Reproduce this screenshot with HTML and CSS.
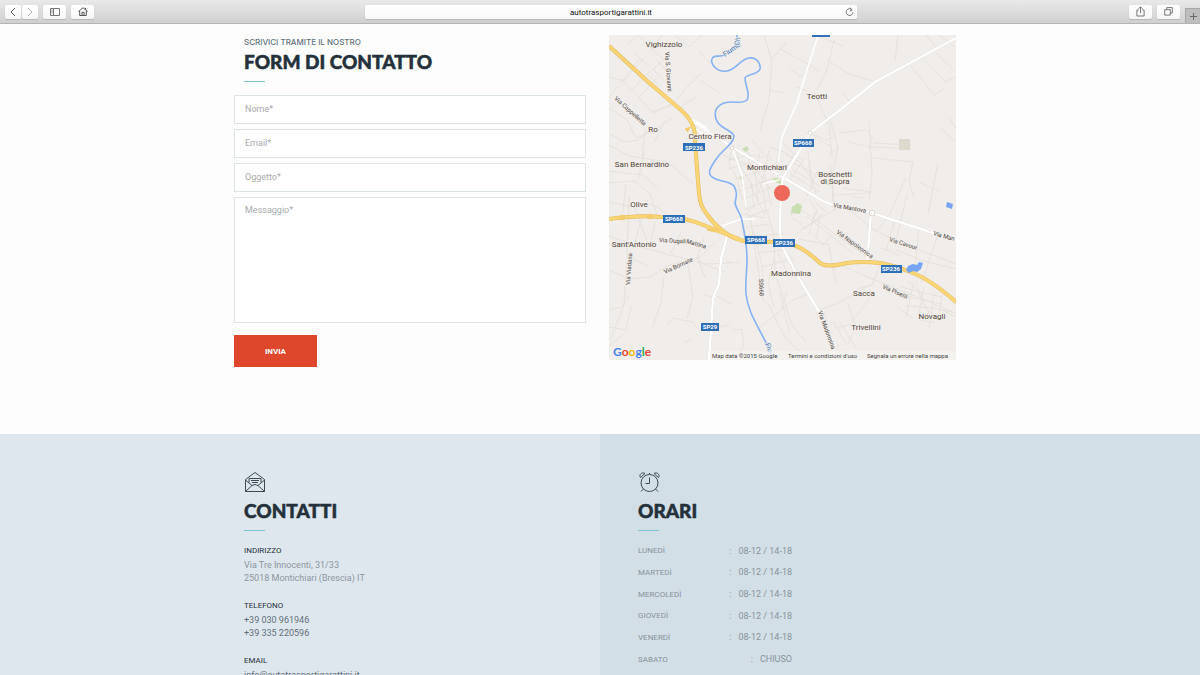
FILE: index.html
```html
<!DOCTYPE html>
<html lang="it">
<head>
<meta charset="utf-8">
<meta name="viewport" content="width=device-width, initial-scale=1">
<title>autotrasportigarattini.it</title>
<link rel="stylesheet" href="styles.css">
</head>
<body>
<header class="toolbar">
  <div class="tools">
    <div class="pair">
      <button class="tool" aria-label="Indietro"><svg width="8" height="10" viewBox="0 0 8 10"><path d="M6 1 2 5l4 4" stroke="#555"/></svg></button>
      <button class="tool" aria-label="Avanti"><svg width="8" height="10" viewBox="0 0 8 10"><path d="m2 1 4 4-4 4" stroke="#b5b5b5"/></svg></button>
    </div>
    <button class="tool wide" aria-label="Barra laterale"><svg width="10" height="8" viewBox="0 0 10 8"><path d="M.5.5h9v7h-9zM3.500.5v7M1.500 2h1M1.500 3.500h1M1.500 5h1" stroke="#777"/></svg></button>
    <button class="tool wide" aria-label="Pagina iniziale"><svg width="10" height="9" viewBox="0 0 10 9"><path d="M.5 4.500 5 .7l4.500 3.800M1.700 4v4.500h6.600V4M7.500 2.500V.8M4 8.300v-3h2v3" stroke="#555"/></svg></button>
  </div>
  <div class="address">
    <input class="url" type="text" aria-label="Indirizzo" value="autotrasportigarattini.it">
    <button class="reload" aria-label="Ricarica"><svg width="9" height="10" viewBox="0 0 9 10"><path d="M7.200 2.900A3.400 3.400 0 1 0 8 5.300M4.700.6l2.500 2.300-2.600 1.200" stroke="#777"/></svg></button>
  </div>
  <div class="tools end">
    <button class="tool wide" aria-label="Condividi"><svg width="9" height="11" viewBox="0 0 9 11"><path d="M2.800 4H.9v6h7.200V4H6.200M4.500 7V1M2.500 2.800l2-2 2 2" stroke="#777"/></svg></button>
    <button class="tool wide" aria-label="Pannelli"><svg width="9" height="9" viewBox="0 0 9 9"><path d="M.7 2.700h5.600v5.400H.7zM2.700 2.700V.6h5.600V6h-2" stroke="#777"/></svg></button>
    <button class="newtab" aria-label="Nuovo pannello"><svg width="9" height="9" viewBox="0 0 9 9"><path d="M4.500 1v7M1 4.500h7" stroke="#666"/></svg></button>
  </div>
</header>

<main class="page">
  <section class="contact">
    <div class="formcol">
      <div class="heading">
        <p class="kicker">SCRIVICI TRAMITE IL NOSTRO</p>
        <h2 class="title">FORM DI CONTATTO</h2>
      </div>
      <form class="form">
        <input class="field" type="text" placeholder="Nome*" aria-label="Nome">
        <input class="field" type="email" placeholder="Email*" aria-label="Email">
        <input class="field" type="text" placeholder="Oggetto*" aria-label="Oggetto">
        <textarea class="field area" placeholder="Messaggio*" aria-label="Messaggio"></textarea>
        <button class="send" type="button">INVIA</button>
      </form>
    </div>
    <svg class="map" viewBox="609 35 347 325" role="img" aria-label="Mappa di Montichiari">
      <rect x="609" y="35" width="347" height="325" fill="#f0edea"/>
      <g class="greens">
        <path d="m792 207 6-4 4 3-2 8-9-1zM742 149l5-3 2 3-3 3zM739 177l3-1 2 3-2 2zM773 178l5 0 4 4-2 2-6-3z" fill="#c7deae"/>
        <path d="M826 180h6v5h-6z" fill="#d5dfc0"/>
        <path d="M899 139h11v11h-11z" fill="#dddacd"/>
      </g>
      <g class="lanes">
        <path d="M627 45l11-10 17 17 18 15M635 54l14 12M609 77l15 4 19-22M621 83l18-24M624 82l29 31 20-10M632 90l19-20M639 97l18-19M650 112l25-7M658 63l14 14M653 69l11 12M652 70l14-12M648 75l13 12M656 60l16 14"/>
        <path d="M609 98l9-12M609 108l18 12 9 18 15-6 22-14M609 134l16 8 13-2 13-12M609 145l20 11 38 6 26 22M609 171l34 4 15 13M609 183l26-2 15 13 9 26M638 178l7-27M645 128l-4 46M626 184l-4 34M665 120l-10 21M651 52l11-17M673 104l17-20 12-11M678 109l19-13"/>
        <path d="M676 36l14 11 12-12M701 81l19 12M698 50l12 13M764 35l8 26-3 39-9 31M770 61l16-18M769 90l16 3M789 68l12 9 9-10M780 49l30 16 10 7M796 87l11 4M818 36l25 10M834 40l-7 30-10 20M827 60l22 14 24 7M815 93l14 32 3 32M898 35l-3 26M926 35l9 11M935 52l20 19M923 58l23 24 10-5M911 66l23 29 11-7M939 35l16 12"/>
        <path d="M842 93l10 11M830 119l8 29-9 7M839 133l28-3 5 7-3 12M838 147l-6 30 1 31M849 142l20 5 29 1M869 121l3 54-3 25M873 143l38 2M873 158l40 4M871 193l-37 2M913 161l-4 21 5 15M938 163l-10 51M920 183l19 8M941 128l14 13M949 118l7 10M813 135l14 5 9-4M817 139l14 7M842 188l30 4M865 198l-12-1M831 166l4 45"/>
        <path d="M780 139l9 11 13 10M769 147l15 5 13 9M785 154l15 8 12 17M752 139l8 12 12 9M731 151l-2 13 8 14 5 22M736 149l4 16 12 20 2 24M747 146l4 22 12 21 3 25M760 153l-5 19 3 29M769 150l-3 17-7 25M719 152l10 6 10 4 16 3M728 160l24-5 13 3M727 169l33-8M735 179l38-12M739 191l34-13M742 200l30-13M744 210l25-10M743 219l26-10M755 168l18 25M764 174l8 32M750 184l15 32M757 202l-12 13M779 150l-7 31M794 153l-13 27M808 151l4 39M804 159l-14 21M794 163l24 13M792 169l28 17M790 174l30 18M809 166l7 28M817 172l-10 24"/>
        <path d="M741 214l24 4M746 227l24-3M744 236l41-2M750 216l13 84 6 5 8 17 8 15 7 8 9 7M754 232l8 34 2 22M757 253l27-3M762 267l25-7M767 210l7 26 1 34M778 253l11 23M777 279l15 46 14 17M774 259l-6 24 6 24M787 251l8 12M795 235l30-22M800 230l38-22M809 198l8 13-5 12M814 201l14 12M793 218l14 11M806 199l-8 8M815 211l-6 23M820 215l-3 22M814 235l9 10 8-8M799 208l80 58M806 216l48 38M799 239l31 6"/>
        <path d="M795 207l-4 10M843 204l28 24 23 12 62 24M878 230l12-17 16-35M907 195l-12 50M919 227l-4 44M938 234l-16 48M896 250l27 11 33 8M895 219l-9 32M882 248l18 8M829 246l7 37M836 263l34 15 45 18 40 17M880 265l-8 20-15 4M872 284l-36 20-16 6M848 304l8 22-8 18M840 322l16 26M809 293l-16 7-24 20-16 13"/>
        <path d="M609 236l26 9 35 10 31 8 24 9M609 270l20 9 21-2 19-12 30-7 17-17M629 197l-2 59-3 48-13 35M635 208l13 36M609 310l13-3 7-12M609 327l17 3 5-24M629 257l19 9M664 276l-3 27-9 26M688 265l5 32-6 21M698 258l7 20M667 325l6-7 19 4 7 8 31-5M733 330l9-1 2 17-7 9M692 338l-8 5M717 296l14 8M703 294l9 3M681 232l-10 21M704 238l-7 20 7 6 28-1M726 262l12 1M641 220l-6 22M655 222l-5 25M609 202l24 5 19-3 18 12"/>
        <path d="M908 281l12 11 10 24M916 280l7 26 15 13M901 287l19 5 22 5M904 296l20 4 19 4M906 306l26 2 20 4M914 281l-8 36M924 287l-5 28M934 293l-5 35M942 295l-4 27M897 306l16 13M920 320l15 3M942 310l14 7M869 299l-19 25-12 4M824 312l9 36M833 321l14 24M609 346l15-12M780 293l9 38M787 291l-6 19"/>
      </g>
      <g class="roads">
        <path d="M818 36l-11 34-10 33-15 34-4 25"/>
        <path class="major" d="M687 118 732 147 784 178 823 201Q835 207 872 213L933 233 956 240"/>
        <path class="major" d="M956 38 875 82 850 102 810 133 800 150 783 177 781 193 780 222Q780 245 784 250L797 275 818 310 827 330 835 358"/>
        <path class="major" d="m727 236-6 23-2 25-6 14-4 62"/>
        <path class="major" d="m871 213-4 51"/>
        <path d="m732 147 10 28 4 31M722 226l19-7h14M779 180l-17 4"/>
      </g>
      <path d="M687 118q18 6 21 14t-18-6" fill="none" stroke="#fff" stroke-width="2"/>
      <path class="river" d="M737 35v8q-4 8-11 11c-6 5-12-1-14 5-2 4 4 12 11 12 11 2 17-12 26-13 8-1 12 6 11 11-2 6-14 5-15 9 0 7 6 17 2 22-6 5-13 0-23 3-8 3-10 9-8 16 3 10 15 10 18 17 0 8-12 14-17 22-5 7-10 14-6 18 5 6 18 4 23 10 4 7 2 11 1 17 1 6 6 11 7 18 3 14 5 26 5 38 0 13-2 24-1 35 2 17 10 29 16 41 5 9 8 15 10 24"/>
      <g class="highway">
        <path class="edge" d="m609 46 37 34 28 24q15 12 18 20 4 8 3 19l4 50q1 13 7 20 14 20 31 26 10 4 26 3 17-1 30 3 11 3 27 18 7 5 27 0 15-2 33 0 13 2 33 10 18 7 43 29M609 219q30-4 52-2 25 0 45 9 17 7 33 13"/>
        <path class="fill" d="m609 46 37 34 28 24q15 12 18 20 4 8 3 19l4 50q1 13 7 20 14 20 31 26 10 4 26 3 17-1 30 3 11 3 27 18 7 5 27 0 15-2 33 0 13 2 33 10 18 7 43 29M609 219q30-4 52-2 25 0 45 9 17 7 33 13"/>
        <path d="m691 127-6 2 3 3M707 230l7-3 7 3-6 2zM618 218l4-3 4 3-4 2zM646 217l4-3 4 3-4 2z" fill="#f3cc6b" stroke="#f3cc6b"/>
      </g>
      <g fill="#fff" stroke="#ddd6cc"><circle cx="810" cy="133" r="2"/><circle cx="872" cy="213" r="3"/><circle cx="732" cy="148" r="2"/></g>
      <path d="M906 270l2-4 5-2 4 1 2-3 4 1-2 6-4 3-4-1-4 2zM947 202l6 2-1 5-6-2z" fill="#78a5f3"/>
      <g class="shields">
        <rect x="812" y="35" width="18" height="2"/>
        <rect x="683" y="143" width="22" height="8"/><text x="694" y="150">SP236</text>
        <rect x="793" y="139" width="21" height="8"/><text x="803" y="145">SP668</text>
        <rect x="663" y="215" width="22" height="8"/><text x="674" y="221">SP668</text>
        <rect x="745" y="236" width="22" height="8"/><text x="756" y="242">SP668</text>
        <rect x="773" y="239" width="22" height="8"/><text x="784" y="245">SP236</text>
        <rect x="881" y="265" width="21" height="8"/><text x="891" y="271">SP236</text>
        <rect x="701" y="323" width="18" height="8"/><text x="710" y="329">SP29</text>
      </g>
      <g class="places">
        <text x="664" y="47">Vighizzolo</text>
        <text x="817" y="99">Teotti</text>
        <text x="653" y="132">Ro</text>
        <text x="710" y="139">Centro Fiera</text>
        <text x="642" y="167">San Bernardino</text>
        <text x="767" y="170">Montichiari</text>
        <text x="835" y="177">Boschetti</text>
        <text x="835" y="184">di Sopra</text>
        <text x="639" y="207">Olive</text>
        <text x="634" y="247">Sant'Antonio</text>
        <text x="791" y="276">Madonnina</text>
        <text x="864" y="296">Sacca</text>
        <text x="932" y="319">Novagli</text>
        <text x="866" y="330">Trivellini</text>
      </g>
      <g class="streets">
        <text transform="translate(665 52) rotate(86)">Via S. Giovanni</text>
        <text transform="translate(614 99) rotate(42)">Via Cappelletta</text>
        <text transform="translate(659 242) rotate(3)">Via Dugali</text>
        <text transform="translate(686 243) rotate(16)">Mattina</text>
        <text transform="translate(665 274) rotate(-25)">Via Bornate</text>
        <text transform="translate(630 285) rotate(-86)">Via Viadana</text>
        <text transform="translate(833 207) rotate(10)">Via Mantova</text>
        <text transform="translate(933 235) rotate(16)">Via Man</text>
        <text transform="translate(836 233) rotate(36)">Via Napoleonica</text>
        <text transform="translate(889 241) rotate(18)">Via Cavour</text>
        <text transform="translate(882 288) rotate(24)">Via Pisetti</text>
        <text transform="translate(818 312) rotate(70)">Via Madonnina</text>
        <text transform="translate(759 279) rotate(88)">SS668</text>
        <text class="water" transform="translate(725 57) rotate(-35)">Fiume</text>
        <text class="water" transform="translate(739 46) rotate(-80)">Ch</text>
        <text class="water" transform="translate(765 344) rotate(68)">Fiu</text>
      </g>
      <circle cx="782" cy="193" r="8" fill="#ec5547" fill-opacity=".88"/>
      <rect x="710" y="351" width="246" height="9" fill="#f5f3f1" fill-opacity=".7"/>
      <g class="legal">
        <text x="712" y="358">Map data ©2015 Google</text>
        <text x="788" y="358">Termini e condizioni d'uso</text>
        <text x="867" y="358">Segnala un errore nella mappa</text>
      </g>
      <text class="google" x="613" y="356"><tspan fill="#4285f4">G</tspan><tspan fill="#ea4335">o</tspan><tspan fill="#fbbc05">o</tspan><tspan fill="#4285f4">g</tspan><tspan fill="#34a853">l</tspan><tspan fill="#ea4335">e</tspan></text>
    </svg>
  </section>

  <section class="info">
    <div class="panel contacts">
      <div class="inner">
        <svg class="icon" viewBox="0 0 22 22"><path d="M1.500 8.500 11 1.500l9.500 7v12h-19zM1.500 9l6.500 5.500M20.500 9 14 14.500M1.500 20.500 8 14.500q3-2 6 0l6.500 6M5 11.500V7.500h12v4M7 9.500h8M8 11.500h6"/></svg>
        <h2 class="title">CONTATTI</h2>
        <dl class="details">
          <dt>INDIRIZZO</dt>
          <dd>Via Tre Innocenti, 31/33<br>25018 Montichiari (Brescia) IT</dd>
          <dt>TELEFONO</dt>
          <dd class="strong">+39 030 961946<br>+39 335 220596</dd>
          <dt>EMAIL</dt>
          <dd class="strong"><a href="mailto:info@autotrasportigarattini.it">info@autotrasportigarattini.it</a></dd>
        </dl>
      </div>
    </div>
    <div class="panel hours">
      <div class="inner">
        <svg class="icon" viewBox="0 0 22 22"><circle cx="11.500" cy="12" r="8.500"/><path d="M11.500 6.500v6h-4M5.500 18 3 20.500M17.500 18l2.500 2.500M2.500 6.500C.5 4 4 .5 7 2.500zM20.500 6.500C22.500 4 19 .5 16 2.500zM11.500 3.500V2"/></svg>
        <h2 class="title">ORARI</h2>
        <table class="times">
          <tr><th scope="row">LUNEDÌ</th><td><span class="colon">:</span>08-12 / 14-18</td></tr>
          <tr><th scope="row">MARTEDÌ</th><td><span class="colon">:</span>08-12 / 14-18</td></tr>
          <tr><th scope="row">MERCOLEDÌ</th><td><span class="colon">:</span>08-12 / 14-18</td></tr>
          <tr><th scope="row">GIOVEDÌ</th><td><span class="colon">:</span>08-12 / 14-18</td></tr>
          <tr><th scope="row">VENERDÌ</th><td><span class="colon">:</span>08-12 / 14-18</td></tr>
          <tr><th scope="row">SABATO</th><td><span class="colon">:</span>CHIUSO</td></tr>
        </table>
      </div>
    </div>
  </section>
</main>
</body>
</html>
```
FILE: styles.css
```css
* { box-sizing: border-box; }
body {
  margin: 0;
  height: 100vh;
  display: flex;
  flex-direction: column;
  overflow: hidden;
  background: #fdfdfd;
  color: #24313b;
  font-family: Roboto, "Liberation Sans", sans-serif;
  font-size: 9px;
}
h2, p, dl, dd { margin: 0; }
button, input, textarea { font: inherit; margin: 0; }

/* Browser bar */
.toolbar {
  flex: none;
  height: 24px;
  display: grid;
  grid-template-columns: 365fr 492px 343fr;
  align-items: center;
  background: linear-gradient(#e9e9e9, #d0d0d0);
  border-bottom: 1px solid #b4b4b4;
}
.toolbar svg, .icon { fill: none; stroke-width: 1; }
.tools { display: flex; gap: 5px; padding-left: 5px; align-items: center; height: 100%; }
.tools.end { justify-content: flex-end; padding-left: 0; }
.pair { display: flex; gap: 1px; }
.tool {
  width: 16px;
  height: 14px;
  padding: 0;
  display: grid;
  place-items: center;
  border: 0;
  border-radius: 2px;
  background: linear-gradient(#fff, #f6f6f6);
  box-shadow: 0 1px 1px #b5b5b5;
}
.wide { width: 23px; }
.newtab {
  width: 15px;
  height: 15px;
  padding: 0;
  align-self: flex-end;
  display: grid;
  place-items: center;
  border: 1px solid #a8a8a8;
  border-width: 1px 0 0 1px;
  background: #bdbdbd;
}
.address {
  display: grid;
  grid-template-columns: 16px 1fr 16px;
  height: 14px;
  border-radius: 2px;
  background: linear-gradient(#fff, #f8f8f8);
  box-shadow: 0 1px 1px #b5b5b5;
}
.url {
  grid-column: 2;
  min-width: 0;
  padding: 1px 0 0;
  border: 0;
  background: none;
  text-align: center;
  font-size: 8px;
  color: #111;
}
.reload { border: 0; padding: 0; background: none; display: grid; place-items: center; }

/* Form and map */
.page { flex: 1; min-height: 0; display: flex; flex-direction: column; overflow: hidden; }
.contact {
  flex: none;
  width: 100%;
  max-width: 732px;
  margin: 0 auto;
  padding: 11px 10px 67px 0;
  display: grid;
  grid-template-columns: 352px 1fr;
  column-gap: 23px;
  align-items: start;
}
.heading { padding: 1px 0 0 10px; }
.kicker { font-family: Inter, sans-serif; font-size: 8px; line-height: 12px; font-weight: 500; color: #5f717c; }
.title {
  font-family: Lato, sans-serif;
  font-weight: 900;
  font-size: 19px;
  line-height: 27px;
  color: #24313b;
  -webkit-text-stroke: .5px #24313b;
}
.title::after { content: ""; display: block; width: 21px; height: 1px; margin-top: 6px; background: #7fc4d2; }
.form { display: flex; flex-direction: column; gap: 5px; padding-top: 13px; }
.field {
  width: 100%;
  height: 29px;
  padding: 0 10px 2px;
  border: 1px solid #dde4e4;
  border-radius: 0;
  background: #fff;
  color: #24313b;
}
.area { height: 126px; padding-top: 7px; resize: none; display: block; }
.field::placeholder { color: #a8aaab; opacity: 1; }
.send {
  width: 83px;
  height: 32px;
  margin-top: 7px;
  border: 0;
  background: #de472c;
  color: #fff;
  font-size: 8px;
  font-weight: 700;
}
.map { display: block; width: 100%; height: auto; }
.lanes { fill: none; stroke: #e2ddd6; stroke-width: .7; }
.roads { fill: none; stroke: #fff; stroke-width: 1.5; }
.major { stroke-width: 2.5; filter: drop-shadow(0 0 .5px #cbc4ba); }
.river { fill: none; stroke: #86b1f2; stroke-width: 1.6; }
.highway { fill: none; }
.highway .edge { stroke: #e2b95b; stroke-width: 4; }
.highway .fill { stroke: #fad575; stroke-width: 3; }
.shields rect { fill: #2f6fb8; }
.shields text { fill: #fff; font-size: 6px; font-weight: 700; text-anchor: middle; }
.places { fill: #514639; font-size: 8px; text-anchor: middle; }
.places, .streets { paint-order: stroke; stroke: #f0edea; stroke-width: 1.5; }
.streets { fill: #4b443d; font-size: 6px; }
.water { fill: #4576b8; font-size: 7px; }
.legal { fill: #444; font-size: 6px; }
.google { font-family: Lato, sans-serif; font-size: 12px; font-weight: 700; }

/* Contacts and hours */
.info { flex: 1 0 auto; display: grid; grid-template-columns: 1fr 1fr; }
.panel { padding-top: 37px; }
.contacts { background: #dfe7ee; }
.hours { background: #d3dfe7; }
.inner { max-width: 366px; }
.contacts .inner { margin-left: auto; padding-left: 10px; }
.hours .inner { padding-left: 38px; }
.icon { display: block; width: 22px; height: 22px; stroke: #3c4a54; }
.panel .title { padding-top: 4px; }
.details { padding-top: 13px; line-height: 13px; color: #8b969f; }
.details dt { font-size: 8px; color: #24313b; padding-bottom: 2px; }
.details dd { padding-bottom: 14px; }
.details .strong { color: #5f6f7b; }
.details a { color: inherit; text-decoration: none; }
.times { width: 154px; height: 130px; margin-top: 9px; border-collapse: collapse; color: #87939c; }
.times th { padding: 0; font-size: 8px; font-weight: 400; text-align: left; }
.times td { padding: 0; text-align: right; }
.colon { padding-right: 7px; }
```
